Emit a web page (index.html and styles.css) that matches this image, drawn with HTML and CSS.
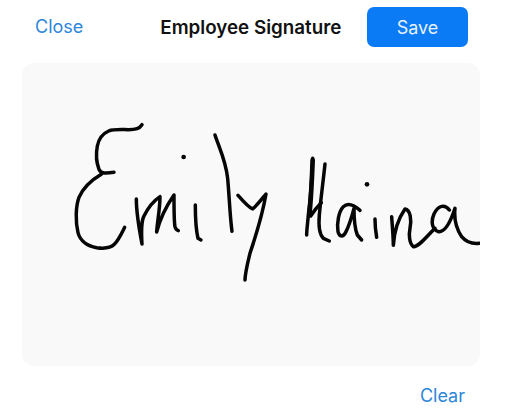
FILE: index.html
```html
<!DOCTYPE html>
<html lang="en">
<head>
<meta charset="utf-8">
<title>Employee Signature</title>
<link rel="stylesheet" href="styles.css">
</head>
<body>
<header class="bar">
  <span class="link">Close</span>
  <h1 class="title">Employee Signature</h1>
  <button class="save" type="button">Save</button>
</header>
<main class="pad">
  <svg class="sig" viewBox="22 63 458 303" aria-label="Signature">
    <g class="ink" transform="translate(60 110) scale(.3333)">
      <path d="M246 44C238 56 228 59 205 59C185 59 160 57 146 63C128 71 116 88 112 108C108 130 110 160 117 178C122 192 140 190 162 187"/>
      <path d="M125 192C98 208 70 232 57 262C47 288 46 335 54 368C60 392 82 408 110 413C130 416 152 414 163 403C176 390 186 368 194 352"/>
      <path d="M229 267C229 300 238 360 246 402C244 370 242 338 252 318C262 298 282 272 300 260C300 295 292 335 290 366C298 335 312 298 342 255C342 290 342 335 345 350C347 358 351 361 355 362"/>
      <path d="M406 285C406 320 410 368 414 385L423 390"/>
      <path d="M465 75C478 115 497 150 503 205C508 260 510 320 516 364"/>
      <path d="M534 256C548 272 565 292 578 297C592 285 605 268 618 252C610 300 590 370 570 430C564 455 556 485 555 510"/>
      <circle class="dot" cx="371" cy="141" r="7"/>
    </g>
    <g class="ink" transform="translate(280 140) scale(.3333)">
      <path d="M98 55C96 110 92 170 85 225C83 250 80 270 80 285"/>
      <path class="thick" d="M98 60C96 110 94 170 88 225"/>
      <path d="M135 72C130 120 122 180 118 225C115 260 120 285 130 295L148 303"/>
      <path d="M92 228C102 212 112 200 124 188"/>
      <path d="M240 211C225 198 205 186 190 200C176 215 170 250 174 275C178 292 190 292 198 275C208 255 216 228 222 205C222 240 224 265 232 285L245 300"/>
      <path d="M285 237C285 255 287 275 290 292"/>
      <path d="M335 230C337 260 340 290 340 316C342 285 352 240 375 207C392 210 395 240 390 265C386 285 388 310 400 320C415 322 435 295 465 265"/>
      <path d="M508 210C495 192 475 195 462 222C452 245 456 268 475 275C495 278 512 245 525 205C522 235 528 265 545 290C560 308 580 312 598 310"/>
      <circle class="dot" cx="261" cy="133" r="7"/>
    </g>
  </svg>
</main>
<footer class="foot">
  <span class="link">Clear</span>
</footer>
</body>
</html>
```
FILE: styles.css
```css
html, body {
  margin: 0;
  padding: 0;
  background: #fff;
  width: 530px;
  height: 415px;
  overflow: hidden;
  font-family: "Inter", "Liberation Sans", sans-serif;
}
.bar {
  display: flex;
  align-items: center;
  height: 40px;
  padding: 7px 62px 0 35px;
  margin-bottom: 16px;
}
.link {
  color: #2e86d8;
  font-size: 18px;
  line-height: 40px;
}
.title {
  margin: 0 0 0 77px;
  font-size: 18.8px;
  font-weight: 600;
  color: #111;
  white-space: nowrap;
}
.save {
  margin-left: auto;
  width: 101px;
  height: 40px;
  border: 0;
  border-radius: 7px;
  background: #0a7bf5;
  color: #e6f1ff;
  font: inherit;
  font-size: 18px;
}
.pad {
  margin-left: 22px;
  width: 458px;
  height: 303px;
  border-radius: 12px;
  background: #f9f9f9;
  overflow: hidden;
}
.sig {
  display: block;
  width: 458px;
  height: 303px;
}
.ink path {
  fill: none;
  stroke: #060606;
  stroke-width: 10.5;
  stroke-linecap: round;
  stroke-linejoin: round;
}
.ink path.thick {
  stroke-width: 14;
}
.ink .dot {
  fill: #060606;
}
.foot {
  display: flex;
  justify-content: flex-end;
  padding: 10px 65px 0 0;
}
```
